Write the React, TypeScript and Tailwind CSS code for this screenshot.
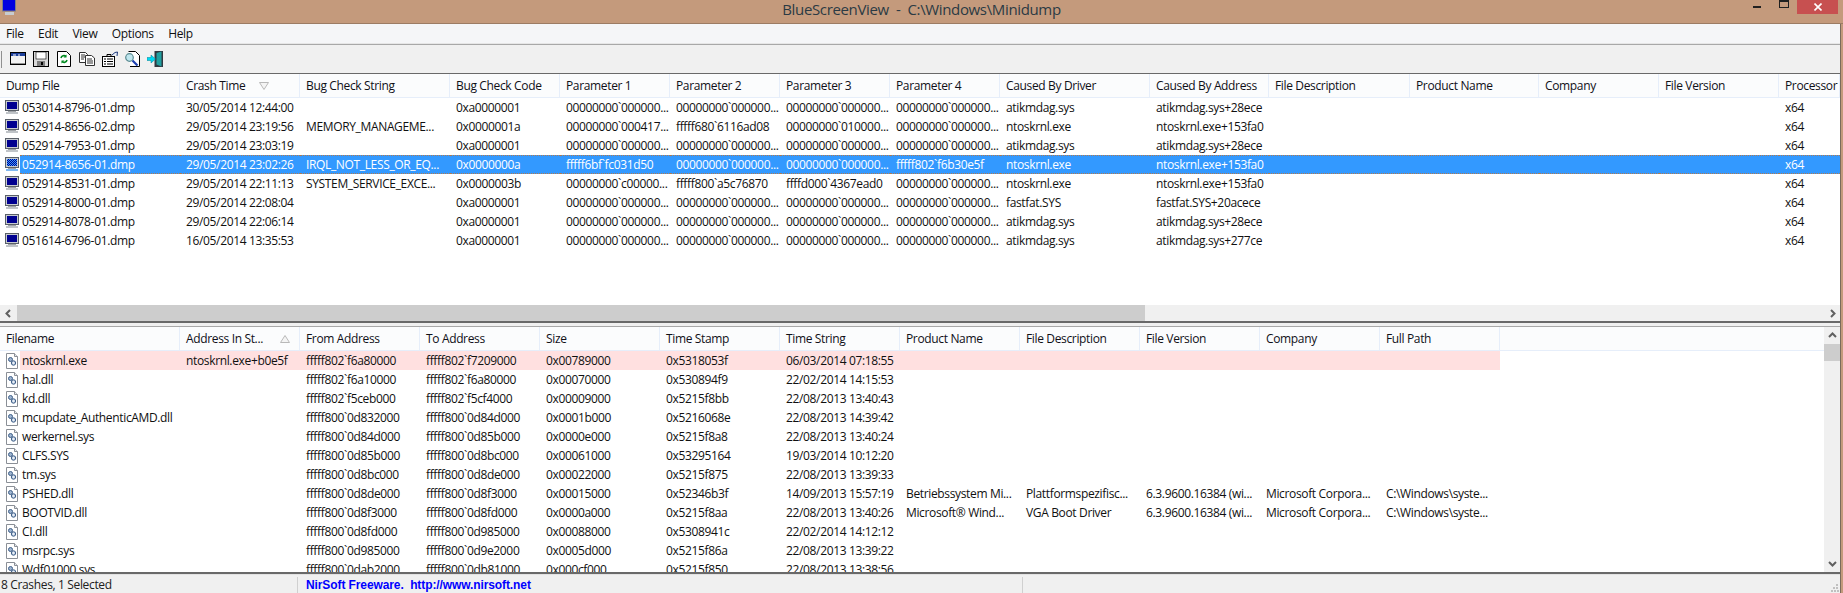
import React from 'react';

const P0 = '00000000`000000...';

const crashes = [
  ['053014-8796-01.dmp', '30/05/2014 12:44:00', '', '0xa0000001', P0, P0, P0, P0, 'atikmdag.sys', 'atikmdag.sys+28ece', '', '', '', '', 'x64'],
  ['052914-8656-02.dmp', '29/05/2014 23:19:56', 'MEMORY_MANAGEME...', '0x0000001a', '00000000`000417...', 'fffff680`6116ad08', '00000000`010000...', P0, 'ntoskrnl.exe', 'ntoskrnl.exe+153fa0', '', '', '', '', 'x64'],
  ['052914-7953-01.dmp', '29/05/2014 23:03:19', '', '0xa0000001', P0, P0, P0, P0, 'atikmdag.sys', 'atikmdag.sys+28ece', '', '', '', '', 'x64'],
  ['052914-8656-01.dmp', '29/05/2014 23:02:26', 'IRQL_NOT_LESS_OR_EQ...', '0x0000000a', 'fffff6bf`fc031d50', P0, P0, 'fffff802`f6b30e5f', 'ntoskrnl.exe', 'ntoskrnl.exe+153fa0', '', '', '', '', 'x64'],
  ['052914-8531-01.dmp', '29/05/2014 22:11:13', 'SYSTEM_SERVICE_EXCE...', '0x0000003b', '00000000`c00000...', 'fffff800`a5c76870', 'ffffd000`4367ead0', P0, 'ntoskrnl.exe', 'ntoskrnl.exe+153fa0', '', '', '', '', 'x64'],
  ['052914-8000-01.dmp', '29/05/2014 22:08:04', '', '0xa0000001', P0, P0, P0, P0, 'fastfat.SYS', 'fastfat.SYS+20acece', '', '', '', '', 'x64'],
  ['052914-8078-01.dmp', '29/05/2014 22:06:14', '', '0xa0000001', P0, P0, P0, P0, 'atikmdag.sys', 'atikmdag.sys+28ece', '', '', '', '', 'x64'],
  ['051614-6796-01.dmp', '16/05/2014 13:35:53', '', '0xa0000001', P0, P0, P0, P0, 'atikmdag.sys', 'atikmdag.sys+277ce', '', '', '', '', 'x64'],
];

const drivers = [
  ['ntoskrnl.exe', 'ntoskrnl.exe+b0e5f', 'fffff802`f6a80000', 'fffff802`f7209000', '0x00789000', '0x5318053f', '06/03/2014 07:18:55', '', '', '', '', ''],
  ['hal.dll', '', 'fffff802`f6a10000', 'fffff802`f6a80000', '0x00070000', '0x530894f9', '22/02/2014 14:15:53', '', '', '', '', ''],
  ['kd.dll', '', 'fffff802`f5ceb000', 'fffff802`f5cf4000', '0x00009000', '0x5215f8bb', '22/08/2013 13:40:43', '', '', '', '', ''],
  ['mcupdate_AuthenticAMD.dll', '', 'fffff800`0d832000', 'fffff800`0d84d000', '0x0001b000', '0x5216068e', '22/08/2013 14:39:42', '', '', '', '', ''],
  ['werkernel.sys', '', 'fffff800`0d84d000', 'fffff800`0d85b000', '0x0000e000', '0x5215f8a8', '22/08/2013 13:40:24', '', '', '', '', ''],
  ['CLFS.SYS', '', 'fffff800`0d85b000', 'fffff800`0d8bc000', '0x00061000', '0x53295164', '19/03/2014 10:12:20', '', '', '', '', ''],
  ['tm.sys', '', 'fffff800`0d8bc000', 'fffff800`0d8de000', '0x00022000', '0x5215f875', '22/08/2013 13:39:33', '', '', '', '', ''],
  ['PSHED.dll', '', 'fffff800`0d8de000', 'fffff800`0d8f3000', '0x00015000', '0x52346b3f', '14/09/2013 15:57:19', 'Betriebssystem Mi...', 'Plattformspezifisc...', '6.3.9600.16384 (wi...', 'Microsoft Corpora...', 'C:\\Windows\\syste...'],
  ['BOOTVID.dll', '', 'fffff800`0d8f3000', 'fffff800`0d8fd000', '0x0000a000', '0x5215f8aa', '22/08/2013 13:40:26', 'Microsoft® Wind...', 'VGA Boot Driver', '6.3.9600.16384 (wi...', 'Microsoft Corpora...', 'C:\\Windows\\syste...'],
  ['CI.dll', '', 'fffff800`0d8fd000', 'fffff800`0d985000', '0x00088000', '0x5308941c', '22/02/2014 14:12:12', '', '', '', '', ''],
  ['msrpc.sys', '', 'fffff800`0d985000', 'fffff800`0d9e2000', '0x0005d000', '0x5215f86a', '22/08/2013 13:39:22', '', '', '', '', ''],
  ['Wdf01000.sys', '', 'fffff800`0dab2000', 'fffff800`0db81000', '0x000cf000', '0x5215f850', '22/08/2013 13:38:56', '', '', '', '', ''],
];

const crashHeaders = ['Dump File', 'Crash Time', 'Bug Check String', 'Bug Check Code', 'Parameter 1', 'Parameter 2', 'Parameter 3', 'Parameter 4', 'Caused By Driver', 'Caused By Address', 'File Description', 'Product Name', 'Company', 'File Version', 'Processor'];
const driverHeaders = ['Filename', 'Address In St...', 'From Address', 'To Address', 'Size', 'Time Stamp', 'Time String', 'Product Name', 'File Description', 'File Version', 'Company', 'Full Path'];

const crashCols = 'grid grid-cols-[180px_120px_150px_110px_110px_110px_110px_110px_150px_119px_141px_129px_120px_120px_61px]';
const driverCols = 'grid grid-cols-[180px_120px_120px_120px_120px_120px_120px_120px_120px_120px_120px_120px]';

function MonitorIcon({ selected }: { selected?: boolean }) {
  return (
    <svg width="15" height="15" viewBox="0 0 15 15" className="shrink-0">
      <defs>
        <pattern id="dither" width="2" height="2" patternUnits="userSpaceOnUse">
          <rect width="2" height="2" fill="#000090" />
          <rect width="1" height="1" fill="#3399ff" />
          <rect x="1" y="1" width="1" height="1" fill="#3399ff" />
        </pattern>
      </defs>
      <rect x="0.5" y="0.5" width="13" height="10" fill="#c8ccd0" stroke="#5a6068" />
      <rect x="2" y="2" width="10" height="7" fill={selected ? 'url(#dither)' : '#000090'} />
      <rect x="3" y="11" width="8" height="1" fill="#a0a4a8" />
      <rect x="1" y="12" width="12" height="2" fill={selected ? '#80b8f0' : '#c0c4c8'} />
    </svg>
  );
}

function FileIcon() {
  return (
    <svg width="14" height="16" viewBox="0 0 14 16" className="shrink-0">
      <path d="M1.5 0.5H9.5L12.5 3.5V15.5H1.5Z" fill="#fff" stroke="#8a8f96" />
      <path d="M9.5 0.5V3.5H12.5" fill="#e4e8ec" stroke="#8a8f96" />
      <circle cx="5.5" cy="6.5" r="2" fill="#9db4d0" stroke="#3f5f88" />
      <circle cx="8.5" cy="10" r="2.2" fill="#c4d2e4" stroke="#3f5f88" />
      <circle cx="8.5" cy="10" r="0.7" fill="#fff" />
    </svg>
  );
}

function Chevron({ dir }: { dir: 'left' | 'right' | 'up' | 'down' }) {
  const d = {
    left: 'M6 1 2.5 4.5 6 8',
    right: 'M3 1 6.5 4.5 3 8',
    up: 'M1 6 4.5 2.5 8 6',
    down: 'M1 3 4.5 6.5 8 3',
  }[dir];
  return (
    <svg width="9" height="9" viewBox="0 0 9 9" className="shrink-0">
      <path d={d} fill="none" stroke="#606060" strokeWidth="2" />
    </svg>
  );
}

function ToolbarIcons() {
  return (
    <div className="flex items-center gap-[7px] ml-[8px]">
      <svg width="16" height="14" viewBox="0 0 16 14">
        <rect x="0.5" y="0.5" width="15" height="12" fill="#f2f2f2" stroke="#000" />
        <rect x="1" y="1" width="14" height="3" fill="#1c3f9a" />
        <path d="M3 3h3M8 3h2" stroke="#fff" />
        <path d="M1 11.5h14" stroke="#909090" />
      </svg>
      <svg width="16" height="16" viewBox="0 0 16 16">
        <rect x="0.5" y="0.5" width="15" height="15" fill="#d8d8d8" stroke="#000" />
        <rect x="3" y="1" width="10" height="7" fill="#fff" stroke="#000" strokeWidth="0.6" />
        <rect x="4" y="10" width="8" height="5" fill="#808080" />
        <rect x="8" y="11" width="2" height="3" fill="#000" />
      </svg>
      <svg width="14" height="16" viewBox="0 0 14 16" className="mx-[1px]">
        <path d="M0.5 0.5H9.5L13.5 4.5V15.5H0.5Z" fill="#fff" stroke="#000" />
        <path d="M4 7a3 3 0 0 1 5-1.5M10 9a3 3 0 0 1-5 1.5" fill="none" stroke="#008a20" strokeWidth="1.6" />
        <path d="M9.5 3.5v3h-3ZM4.5 12.5v-3h3Z" fill="#008a20" />
      </svg>
      <svg width="16" height="14" viewBox="0 0 16 14">
        <path d="M0.5 0.5H6.5L8.5 2.5V10.5H0.5Z" fill="#fff" stroke="#303030" />
        <path d="M6.5 3.5H12.5L15.5 6V13.5H6.5Z" fill="#fff" stroke="#303030" />
        <path d="M2 3h4M2 5h4M2 7h3M8 7h5M8 9h6M8 11h6" stroke="#303030" />
      </svg>
      <svg width="16" height="16" viewBox="0 0 16 16">
        <path d="M10 4 13 1.5 15.5 1 15 5" fill="#e8eef8" stroke="#203a7a" />
        <rect x="0.5" y="5.5" width="12" height="10" fill="#fff" stroke="#000" />
        <path d="M5 3.5h4v2H5Z" fill="#e0e0e0" stroke="#000" />
        <path d="M2 8h2M5 8h6M2 10.5h2M5 10.5h6M2 13h2M5 13h6" stroke="#000" />
      </svg>
      <svg width="15" height="16" viewBox="0 0 15 16">
        <path d="M3.5 0.5H10.5L14.5 4.5V15.5H5" fill="#fff" stroke="#000" />
        <circle cx="4.5" cy="6.5" r="3.8" fill="#bfe6ee" stroke="#5a8a90" strokeWidth="1.2" />
        <path d="M7.5 9.5 12.5 14.5" stroke="#1c3fb0" strokeWidth="2.2" />
      </svg>
      <svg width="16" height="16" viewBox="0 0 16 16">
        <rect x="8" y="0.5" width="7.5" height="15" fill="#303840" stroke="#303840" />
        <path d="M9.5 2 14.5 0.5V15.5L9.5 13.5Z" fill="#20a0a0" />
        <path d="M0 6.5H4V4L8.5 8 4 12V9.5H0Z" fill="#00d8f0" stroke="#008090" strokeWidth="0.5" />
      </svg>
    </div>
  );
}

function HeaderRow({ labels, cols, sorted }: { labels: string[]; cols: string; sorted: 'down' | 'up' }) {
  return (
    <div className={`${cols} h-[24px] bg-[#fbfcfd] border-b border-[#e6eefa]`}>
      {labels.map((label, idx) => (
        <div key={label} className="relative h-[23px] leading-[24px] pl-[6px] border-r border-[#e6eefa] text-[#101018] whitespace-nowrap overflow-hidden">
          {label}
          {idx === 1 && (
            <svg width="10" height="8" viewBox="0 0 10 8" className={sorted === 'down' ? 'absolute right-[30px] top-[8px]' : 'absolute right-[9px] top-[8px]'}>
              {sorted === 'down' ? (
                <path d="M0.5 0.5H9.5L5 7.5Z" fill="#f4f4f4" stroke="#b8b8b8" />
              ) : (
                <path d="M5 0.5 9.5 7.5H0.5Z" fill="#f4f4f4" stroke="#b8b8b8" />
              )}
            </svg>
          )}
        </div>
      ))}
    </div>
  );
}

function ListRow({ values, cols, kind, icon }: { values: string[]; cols: string; kind?: 'selected' | 'flagged'; icon: React.ReactNode }) {
  const tone =
    kind === 'selected'
      ? 'bg-[#3399ff] text-white border-y border-dotted border-[#b07a50] leading-[17px]'
      : kind === 'flagged'
        ? 'bg-[#ffe0e0] text-[#101010] leading-[19px]'
        : 'text-[#101010] leading-[19px]';
  return (
    <div className={cols}>
      <div className="flex h-[19px]">
        <div className="w-[20px] pl-[5px] flex items-center shrink-0">{icon}</div>
        <div className={`flex-1 pl-[2px] whitespace-nowrap ${tone}`}>{values[0]}</div>
      </div>
      {values.slice(1).map((value, idx) => (
        <div key={idx} className={`h-[19px] pl-[6px] whitespace-nowrap overflow-hidden ${tone}`}>
          {value}
        </div>
      ))}
    </div>
  );
}

export default function App() {
  return (
    <div className="w-[1843px] h-[593px] flex flex-col overflow-hidden bg-[#c49a7c] text-[12px] font-['Open_Sans',sans-serif] tracking-[-0.35px]">
      <div className="relative h-[24px] shrink-0 flex justify-center border-b border-[#9c7c64]">
        <div className="absolute left-[2px] top-0">
          <svg width="14" height="16" viewBox="0 0 14 16">
            <rect x="0.5" y="-2" width="13" height="13" fill="#0000e0" stroke="#7a8088" />
            <rect x="3" y="12" width="9" height="3" fill="#c8ccd0" />
          </svg>
        </div>
        <div className="text-[15px] leading-[19px] tracking-[-0.35px] text-[#2b3a44] whitespace-pre">BlueScreenView  -  C:\Windows\Minidump</div>
        <div className="absolute right-[5px] top-0 flex items-start">
          <div className="w-[8px] h-[2px] mt-[6px] bg-[#202020] mr-[18px]" />
          <div className="w-[10px] h-[8px] border border-t-[2px] border-[#202020] mr-[8px]" />
          <div className="w-[41px] h-[14px] bg-[#c75050] flex items-center justify-center">
            <svg width="8" height="8" viewBox="0 0 8 8">
              <path d="M0.5 0.5 7.5 7.5M7.5 0.5 0.5 7.5" stroke="#fff" strokeWidth="1.6" />
            </svg>
          </div>
        </div>
      </div>

      <div className="flex-1 min-h-0 mr-[2px] flex flex-col bg-white border-r border-[#7a6a5c]">
        <div className="h-[19px] shrink-0 bg-[#f5f6f8] flex items-center gap-[14.5px] pl-[6px] text-[#101010]">
          <span>File</span>
          <span>Edit</span>
          <span>View</span>
          <span>Options</span>
          <span>Help</span>
        </div>
        <div className="h-[2px] shrink-0 bg-[#e6e6e6] border-b border-[#a8a8a8]" />
        <div className="h-[29px] shrink-0 bg-[#f0f0f0] flex items-center border-b border-[#696969]">
          <div className="w-[1px] h-[17px] ml-[1px] bg-[#909090]" />
          <ToolbarIcons />
        </div>

        <div className="flex-1 min-h-0 overflow-hidden">
          <HeaderRow labels={crashHeaders} cols={crashCols} sorted="down" />
          {crashes.map((row, idx) => (
            <ListRow key={row[0]} values={row} cols={crashCols} kind={idx === 3 ? 'selected' : undefined} icon={<MonitorIcon selected={idx === 3} />} />
          ))}
        </div>
        <div className="h-[16px] shrink-0 flex bg-[#f0f0f0]">
          <div className="w-[17px] flex items-center justify-center">
            <Chevron dir="left" />
          </div>
          <div className="w-[1128px] bg-[#cdcdcd]" />
          <div className="flex-1" />
          <div className="w-[16px] flex items-center justify-center">
            <Chevron dir="right" />
          </div>
        </div>
        <div className="h-[2px] shrink-0 bg-[#696969]" />
        <div className="h-[4px] shrink-0 bg-[#f0f0f0] border-b border-[#a8a8a8]" />

        <div className="h-[245px] shrink-0 flex">
          <div className="flex-1 min-w-0 overflow-hidden">
            <HeaderRow labels={driverHeaders} cols={driverCols} sorted="up" />
            {drivers.map((row, idx) => (
              <ListRow key={row[0]} values={row} cols={driverCols} kind={idx === 0 ? 'flagged' : undefined} icon={<FileIcon />} />
            ))}
          </div>
          <div className="w-[16px] shrink-0 bg-[#f0f0f0] flex flex-col items-center">
            <div className="h-[17px] w-full flex items-center justify-center">
              <Chevron dir="up" />
            </div>
            <div className="h-[17px] w-full bg-[#cdcdcd]" />
            <div className="flex-1" />
            <div className="h-[17px] w-full flex items-center justify-center">
              <Chevron dir="down" />
            </div>
          </div>
        </div>

        <div className="h-[2px] shrink-0 bg-[#696969]" />
        <div className="h-[19px] shrink-0 relative flex bg-[#f0f0f0] border-t border-[#e2e2e2] text-[#202020]">
          <div className="w-[298px] mt-[2px] pl-[1px] leading-[16px] border-r border-[#d0d0d0]">8 Crashes, 1 Selected</div>
          <div className="w-[725px] mt-[2px] pl-[8px] leading-[16px] border-r border-[#d0d0d0] font-['Liberation_Sans',sans-serif] font-bold text-[#0000ff] whitespace-pre tracking-[-0.1px]">NirSoft Freeware.  http://www.nirsoft.net</div>
          <svg width="8" height="8" viewBox="0 0 8 8" className="absolute right-[1px] bottom-[1px]">
            <path d="M5 0h2v2H5ZM2 3h2v2H2ZM5 3h2v2H5ZM0 6h2v2H0ZM3 6h2v2H3ZM6 6h2v2H6Z" fill="#c0c0c0" />
          </svg>
        </div>
      </div>
    </div>
  );
}
